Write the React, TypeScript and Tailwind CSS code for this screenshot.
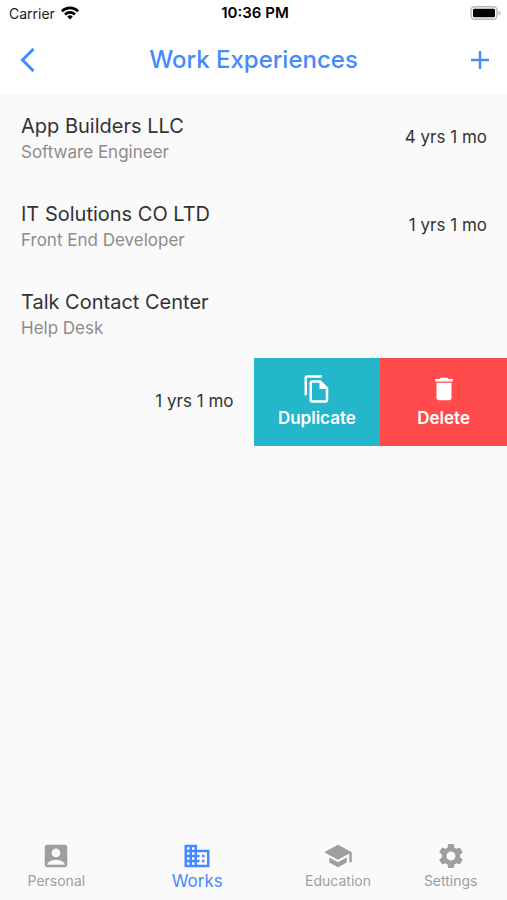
import type { IconType } from "react-icons";
import {
  MdAccountBox,
  MdBusiness,
  MdDelete,
  MdOutlineFileCopy,
  MdSchool,
  MdSettings,
} from "react-icons/md";
import clsx from "clsx";

type Work = { company: string; role: string; duration?: string };

const works: Work[] = [
  { company: "App Builders LLC", role: "Software Engineer", duration: "4 yrs 1 mo" },
  { company: "IT Solutions CO LTD", role: "Front End Developer", duration: "1 yrs 1 mo" },
  { company: "Talk Contact Center", role: "Help Desk" },
];

const tabs: { label: string; icon: IconType; active?: boolean }[] = [
  { label: "Personal", icon: MdAccountBox },
  { label: "Works", icon: MdBusiness, active: true },
  { label: "Education", icon: MdSchool },
  { label: "Settings", icon: MdSettings },
];

function StatusBar() {
  return (
    <div className="grid h-[26px] grid-cols-3 items-center pl-[9px] pr-1.5 text-[14px] text-[#1a1a1a]">
      <div className="flex items-center gap-1.5">
        <span>Carrier</span>
        <svg className="h-3.5 w-[18px]" viewBox="0 0 18 14" aria-hidden="true">
          <g fill="none" stroke="#000" strokeWidth="2.6">
            <path d="M.9 5.3a11.4 11.4 0 0 1 16.2 0" />
            <path d="M4 8.5a7 7 0 0 1 10 0" />
          </g>
          <path d="M9 13.6 6.2 10.7a4 4 0 0 1 5.6 0z" fill="#000" />
        </svg>
      </div>
      <span className="text-center text-[15px] font-semibold text-black">10:36 PM</span>
      <svg className="h-3.5 w-[31px] justify-self-end" viewBox="0 0 31 14" aria-hidden="true">
        <rect x="1" y=".8" width="26" height="12.4" rx="3.5" fill="#fff" stroke="#b5b5b5" strokeWidth="1.4" />
        <rect x="3" y="2.8" width="22" height="8.4" rx="1.2" fill="#000" />
        <path d="M28.6 4.8q2 .8 2 2.2t-2 2.2z" fill="#b5b5b5" />
      </svg>
    </div>
  );
}

function Header() {
  return (
    <header className="bg-white text-[#448aff]">
      <StatusBar />
      <div className="flex h-[68px] items-center justify-between px-[15px]">
        <button type="button" aria-label="Back" className="flex size-6 items-center justify-center">
          <svg className="h-6 w-4" viewBox="0 0 16 24" fill="none" stroke="currentColor" strokeWidth="3">
            <path d="M14.5 1 3.5 12l11 11" />
          </svg>
        </button>
        <h1 className="text-[24px] font-medium">Work Experiences</h1>
        <button type="button" aria-label="Add" className="flex size-6 items-center justify-center">
          <svg className="size-[18px]" viewBox="0 0 18 18" fill="none" stroke="currentColor" strokeWidth="2.4">
            <path d="M9 0v18M0 9h18" />
          </svg>
        </button>
      </div>
    </header>
  );
}

function WorkRow({ company, role, duration }: Work) {
  return (
    <li className="flex h-[88px] items-center justify-between pl-[21px] pr-5">
      <div>
        <h2 className="text-[20px] leading-7">{company}</h2>
        <p className="text-[17px] leading-6 text-[#8c8c8c]">{role}</p>
      </div>
      {duration && <span className="text-[17px]">{duration}</span>}
    </li>
  );
}

function SwipedRow({ duration }: { duration: string }) {
  return (
    <li className="grid h-[88px] grid-cols-4">
      <span className="col-span-2 self-center pr-5 text-right text-[17px]">{duration}</span>
      <button
        type="button"
        className="flex flex-col items-center justify-center gap-0.5 bg-[#24b6cb] text-[17px] leading-6 font-semibold text-white"
      >
        <MdOutlineFileCopy className="size-[30px]" />
        Duplicate
      </button>
      <button
        type="button"
        className="flex flex-col items-center justify-center gap-0.5 bg-[#ff4b4b] text-[17px] leading-6 font-semibold text-white"
      >
        <MdDelete className="size-[30px]" />
        Delete
      </button>
    </li>
  );
}

function TabBar() {
  return (
    <nav className="flex h-[72px] border-t border-[#f5f5f5] bg-[#fafafa]">
      {tabs.map(({ label, icon: Icon, active }) => (
        <button
          key={label}
          type="button"
          aria-current={active ? "page" : undefined}
          className={clsx(
            "flex flex-col items-center pt-3 leading-5",
            active ? "flex-3 text-[17px] text-[#448aff]" : "flex-2 text-[14px] text-[#9e9e9e]"
          )}
        >
          <Icon className="size-[30px]" />
          {label}
        </button>
      ))}
    </nav>
  );
}

export default function App() {
  return (
    <div className="flex min-h-screen flex-col bg-[#fafafa] font-['Inter',sans-serif] text-[#333333]">
      <Header />
      <main className="flex-1">
        <ul>
          {works.map((work) => (
            <WorkRow key={work.company} {...work} />
          ))}
          <SwipedRow duration="1 yrs 1 mo" />
        </ul>
      </main>
      <TabBar />
    </div>
  );
}
